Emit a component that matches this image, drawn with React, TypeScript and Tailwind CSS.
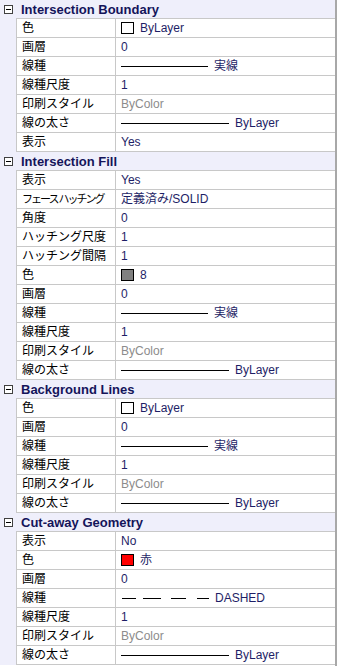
type Row =
  | { label: string; kind: "text"; value: string }
  | { label: string; kind: "gray"; value: string }
  | { label: string; kind: "swatch"; value: string; color: string }
  | { label: string; kind: "line"; value: string; len: number }
  | { label: string; kind: "dashed"; value: string };

type Group = { title: string; rows: Row[] };

const ltype: Row = { label: "線種", kind: "line", value: "実線", len: 87 };
const lweight: Row = { label: "線の太さ", kind: "line", value: "ByLayer", len: 108 };

const GROUPS: Group[] = [
  {
    title: "Intersection Boundary",
    rows: [
      { label: "色", kind: "swatch", value: "ByLayer", color: "#ffffff" },
      { label: "画層", kind: "text", value: "0" },
      ltype,
      { label: "線種尺度", kind: "text", value: "1" },
      { label: "印刷スタイル", kind: "gray", value: "ByColor" },
      lweight,
      { label: "表示", kind: "text", value: "Yes" },
    ],
  },
  {
    title: "Intersection Fill",
    rows: [
      { label: "表示", kind: "text", value: "Yes" },
      { label: "フェース ハッチング", kind: "text", value: "定義済み/SOLID" },
      { label: "角度", kind: "text", value: "0" },
      { label: "ハッチング尺度", kind: "text", value: "1" },
      { label: "ハッチング間隔", kind: "text", value: "1" },
      { label: "色", kind: "swatch", value: "8", color: "#808080" },
      { label: "画層", kind: "text", value: "0" },
      ltype,
      { label: "線種尺度", kind: "text", value: "1" },
      { label: "印刷スタイル", kind: "gray", value: "ByColor" },
      lweight,
    ],
  },
  {
    title: "Background Lines",
    rows: [
      { label: "色", kind: "swatch", value: "ByLayer", color: "#ffffff" },
      { label: "画層", kind: "text", value: "0" },
      ltype,
      { label: "線種尺度", kind: "text", value: "1" },
      { label: "印刷スタイル", kind: "gray", value: "ByColor" },
      lweight,
    ],
  },
  {
    title: "Cut-away Geometry",
    rows: [
      { label: "表示", kind: "text", value: "No" },
      { label: "色", kind: "swatch", value: "赤", color: "#ff0000" },
      { label: "画層", kind: "text", value: "0" },
      { label: "線種", kind: "dashed", value: "DASHED" },
      { label: "線種尺度", kind: "text", value: "1" },
      { label: "印刷スタイル", kind: "gray", value: "ByColor" },
      lweight,
    ],
  },
];

function Value({ row }: { row: Row }) {
  switch (row.kind) {
    case "gray":
      return <span className="text-[#8c8c8c]">{row.value}</span>;
    case "swatch":
      return (
        <span className="flex items-center">
          <span
            className="mr-[6px] h-[12px] w-[13px] border border-black"
            style={{ backgroundColor: row.color }}
          />
          <span>{row.value}</span>
        </span>
      );
    case "line":
      return (
        <span className="flex items-center">
          <span className="mr-[6px] h-px bg-black" style={{ width: row.len }} />
          <span>{row.value}</span>
        </span>
      );
    case "dashed":
      return (
        <span className="flex items-center">
          <svg width="92" height="3" className="mr-[2px]">
            <path d="M1 1.5H15M22 1.5H40M50 1.5H65M76 1.5H88" stroke="#000" strokeWidth="1" />
          </svg>
          <span>{row.value}</span>
        </span>
      );
    default:
      return <span>{row.value}</span>;
  }
}

function GroupHeader({ title }: { title: string }) {
  return (
    <div className="flex h-[19px] bg-[#efeffb]">
      <div className="flex w-[16px] items-center justify-center">
        <span className="flex h-[9px] w-[9px] items-center justify-center border border-[#404040] bg-white">
          <span className="h-px w-[5px] bg-black" />
        </span>
      </div>
      <div className="flex flex-1 items-center border-b border-[#c8c8c8] pl-[5px] text-[13px] font-bold text-[#14145a]">
        {title}
      </div>
    </div>
  );
}

function PropRow({ row }: { row: Row }) {
  const narrow = row.label === "フェース ハッチング";
  return (
    <div className="flex h-[19px]">
      <div className="w-[16px] bg-[#efeffb]" />
      <div
        className={
          narrow
            ? "flex w-[100px] items-center overflow-hidden whitespace-nowrap border-b border-l border-r border-[#c8c8c8] pl-[5px] text-[11px] tracking-[-2px] text-black"
            : "flex w-[100px] items-center overflow-hidden whitespace-nowrap border-b border-l border-r border-[#c8c8c8] pl-[5px] text-black"
        }
      >
        {row.label}
      </div>
      <div className="flex flex-1 items-center whitespace-nowrap border-b border-[#c8c8c8] bg-white pl-[5px] text-[#1e1e66]">
        <Value row={row} />
      </div>
    </div>
  );
}

export default function App() {
  return (
    <div
      className="flex h-[666px] w-[338px] bg-white text-[12px] leading-none"
      style={{ fontFamily: '"Liberation Sans", "Noto Sans CJK JP", sans-serif' }}
    >
      <div className="flex w-[335px] flex-col bg-white">
        {GROUPS.map((g) => (
          <div key={g.title}>
            <GroupHeader title={g.title} />
            {g.rows.map((r, i) => (
              <PropRow key={i} row={r} />
            ))}
          </div>
        ))}
      </div>
      <div className="w-[2px] bg-[#a8a8a8]" />
      <div className="flex-1 bg-white" />
    </div>
  );
}
